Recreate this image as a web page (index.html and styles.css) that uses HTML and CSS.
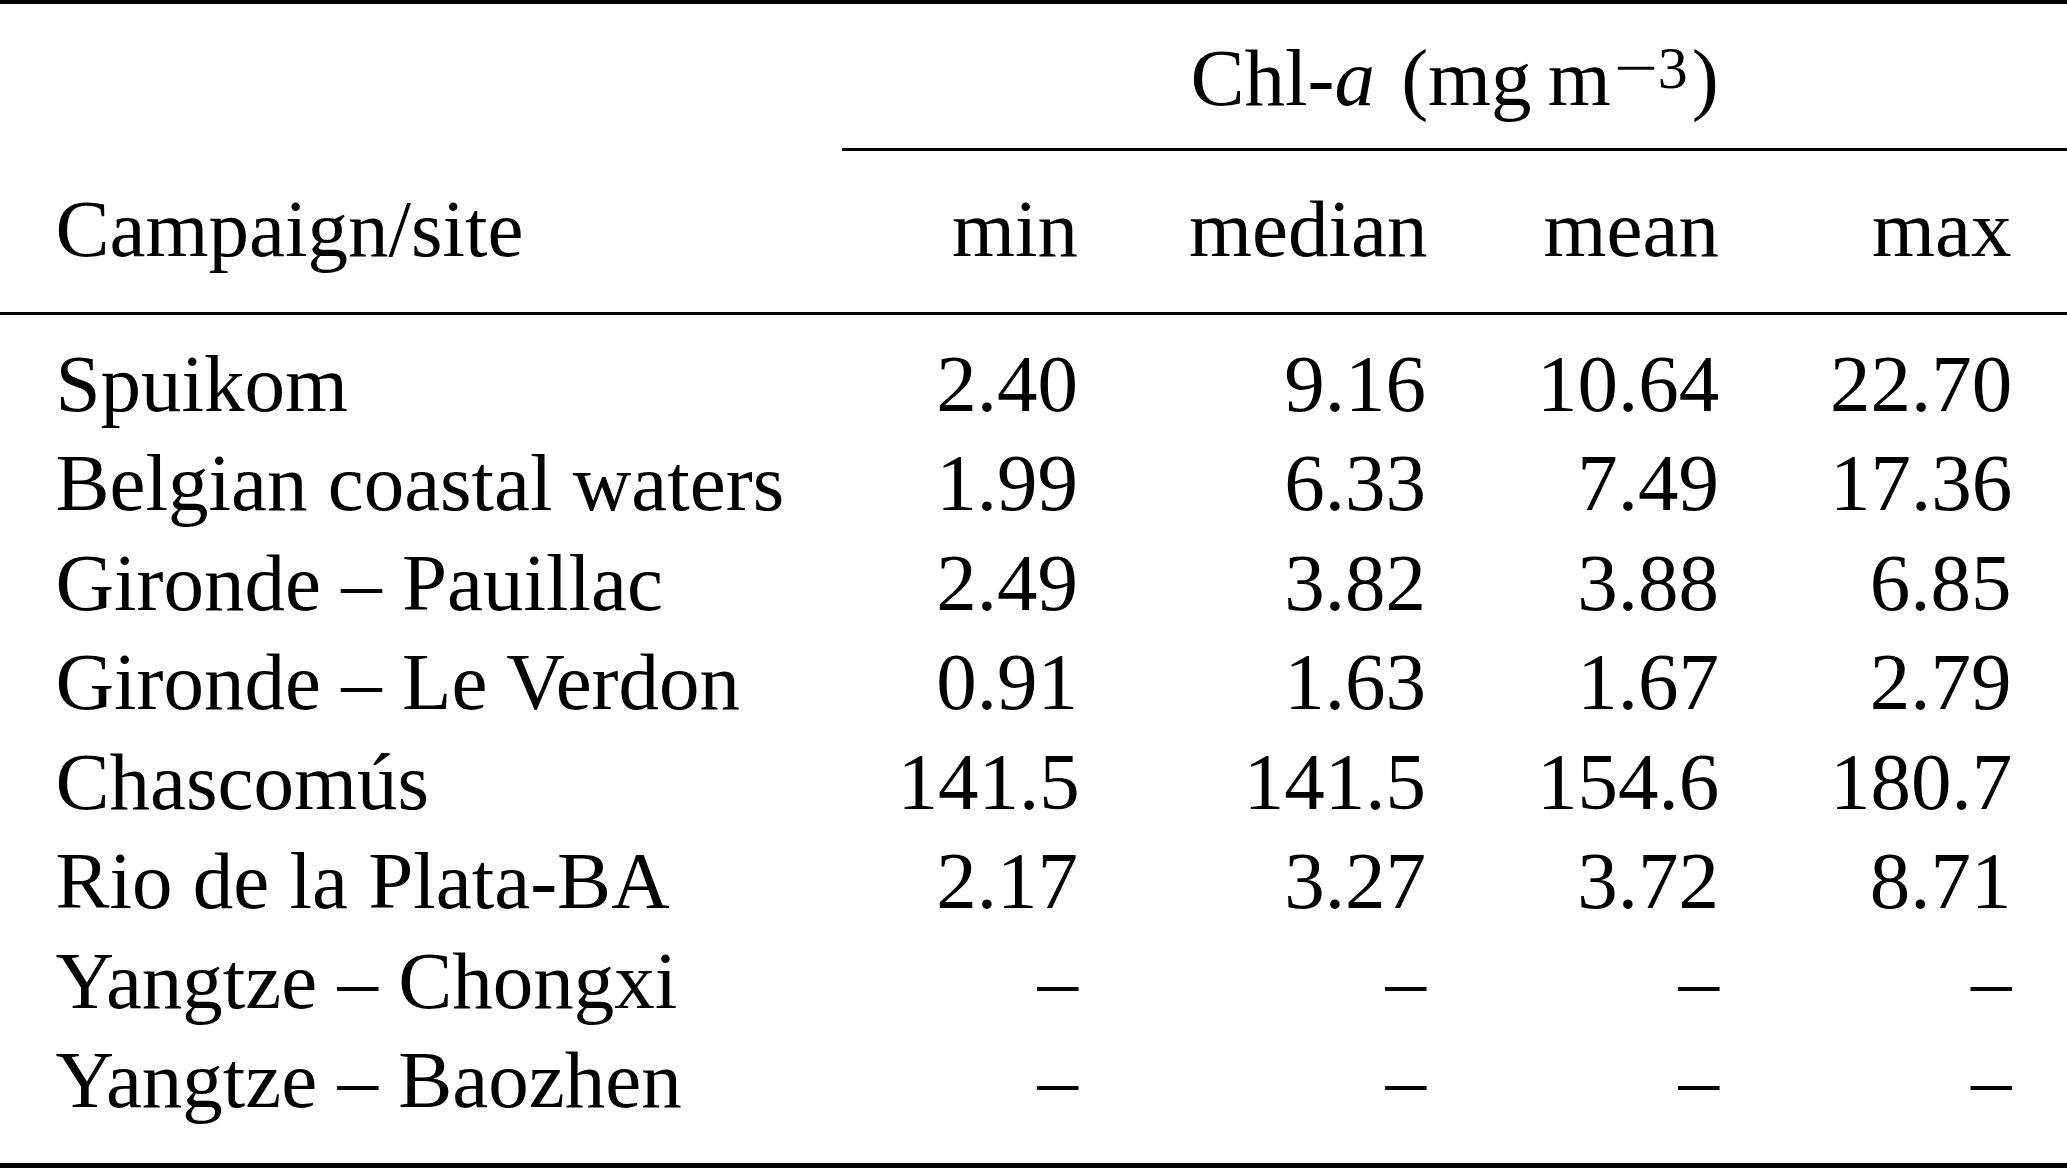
FILE: index.html
```html
<!DOCTYPE html>
<html lang="en">
<head>
<meta charset="utf-8">
<title>Chl-a table</title>
<link rel="stylesheet" href="styles.css">
</head>
<body>
<table class="tbl">
  <colgroup>
    <col class="c-site">
    <col class="c-min">
    <col class="c-median">
    <col class="c-mean">
    <col class="c-max">
  </colgroup>
  <thead>
    <tr class="row-group">
      <th class="cell-blank"></th>
      <th class="cell-group" colspan="4">Chl-<i class="var">a</i> (mg&#8201;m<span class="sup"><span class="minus">&#8722;</span>3</span>)</th>
    </tr>
    <tr class="row-head">
      <th class="cell-site">Campaign/site</th>
      <th class="cell-num cell-sub">min</th>
      <th class="cell-num cell-sub">median</th>
      <th class="cell-num cell-sub">mean</th>
      <th class="cell-num cell-sub">max</th>
    </tr>
  </thead>
  <tbody>
    <tr><td class="cell-site">Spuikom</td><td class="cell-num">2.40</td><td class="cell-num">9.16</td><td class="cell-num">10.64</td><td class="cell-num">22.70</td></tr>
    <tr><td class="cell-site">Belgian coastal waters</td><td class="cell-num">1.99</td><td class="cell-num">6.33</td><td class="cell-num">7.49</td><td class="cell-num">17.36</td></tr>
    <tr><td class="cell-site">Gironde – Pauillac</td><td class="cell-num">2.49</td><td class="cell-num">3.82</td><td class="cell-num">3.88</td><td class="cell-num">6.85</td></tr>
    <tr><td class="cell-site">Gironde – Le Verdon</td><td class="cell-num">0.91</td><td class="cell-num">1.63</td><td class="cell-num">1.67</td><td class="cell-num">2.79</td></tr>
    <tr><td class="cell-site">Chascomús</td><td class="cell-num">141.5</td><td class="cell-num">141.5</td><td class="cell-num">154.6</td><td class="cell-num">180.7</td></tr>
    <tr><td class="cell-site">Rio de la Plata-BA</td><td class="cell-num">2.17</td><td class="cell-num">3.27</td><td class="cell-num">3.72</td><td class="cell-num">8.71</td></tr>
    <tr><td class="cell-site">Yangtze – Chongxi</td><td class="cell-num">–</td><td class="cell-num">–</td><td class="cell-num">–</td><td class="cell-num">–</td></tr>
    <tr><td class="cell-site">Yangtze – Baozhen</td><td class="cell-num">–</td><td class="cell-num">–</td><td class="cell-num">–</td><td class="cell-num">–</td></tr>
  </tbody>
</table>
</body>
</html>
```

FILE: styles.css
```css
html, body {
  margin: 0;
  padding: 0;
  background: #ffffff;
}

body {
  width: 2067px;
  height: 1168px;
  overflow: hidden;
  font-family: "Liberation Serif", "Times New Roman", serif;
  font-size: 81px;
  color: #000000;
}

.tbl {
  width: 2067px;
  table-layout: fixed;
  border-collapse: separate;
  border-spacing: 0;
}

.c-site { width: 842px; }
.c-min { width: 291.5px; }
.c-median { width: 348px; }
.c-mean { width: 293px; }
.c-max { width: 292.5px; }

.tbl th,
.tbl td {
  padding: 0 55.5px;
  font-weight: normal;
  line-height: 99.5px;
  white-space: nowrap;
  vertical-align: top;
}

.cell-site { text-align: left; }
.cell-num { text-align: right; }

/* first header row: group title, top rule */
.row-group th {
  border-top: 4px solid #000;
  padding-top: 25px;
  padding-bottom: 19.5px;
}

.cell-group {
  text-align: center;
}

.var {
  font-style: italic;
  margin-right: 6px;
}

.sup {
  font-size: 60px;
  line-height: 0;
  position: relative;
  top: -17px;
  margin-left: 3px;
  margin-right: 4px;
}

.minus {
  display: inline-block;
  transform: scaleX(1.3);
  margin: 0 5px;
}

/* second header row: cmidrule above number columns, midrule below */
.row-head th {
  border-top: 3px solid transparent;
  border-bottom: 3px solid #000;
  padding-top: 28.5px;
  padding-bottom: 32.5px;
}

.row-head th.cell-sub {
  border-top-color: #000;
}

tbody tr:first-child td {
  padding-top: 20px;
}

tbody tr:last-child td {
  padding-bottom: 32px;
  border-bottom: 5px solid #000;
}
```
